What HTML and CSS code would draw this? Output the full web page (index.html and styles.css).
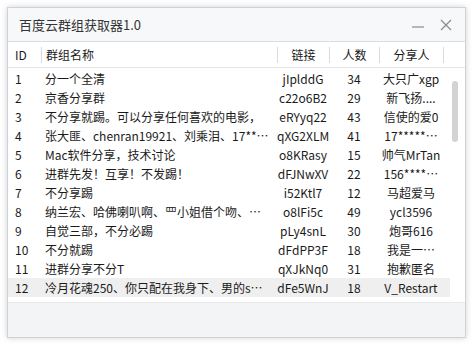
FILE: index.html
```html
<!DOCTYPE html>
<html lang="zh-CN">
<head>
  <meta charset="UTF-8">
  <title>百度云群组获取器1.0</title>
  <link rel="stylesheet" href="styles.css">
</head>
<body>
  <div class="window">
    <div class="titlebar">
      <span class="title">百度云群组获取器1.0</span>
      <div class="buttons">
        <svg class="btn" width="14" height="14" viewBox="0 0 14 14"><line x1="1" y1="9" x2="13" y2="9" stroke="#8a8a8a" stroke-width="1.2"/></svg>
        <svg class="btn" width="14" height="14" viewBox="0 0 14 14"><path d="M2 2 L12 12 M12 2 L2 12" stroke="#8a8a8a" stroke-width="1.2"/></svg>
      </div>
    </div>

    <div class="header">
      <div class="cell id">ID</div>
      <div class="cell name sep">群组名称</div>
      <div class="cell center sep">链接</div>
      <div class="cell center sep">人数</div>
      <div class="cell center sep">分享人</div>
      <div class="cell sep end"></div>
    </div>

    <div class="list">
      <div class="rows">
        <div class="row"><div class="cell id">1</div><div class="cell name">分一个全清</div><div class="cell center">jIplddG</div><div class="cell center">34</div><div class="cell center">大只广xgp</div></div>
        <div class="row"><div class="cell id">2</div><div class="cell name">京香分享群</div><div class="cell center">c22o6B2</div><div class="cell center">29</div><div class="cell center">新飞扬....</div></div>
        <div class="row"><div class="cell id">3</div><div class="cell name">不分享就踢。可以分享任何喜欢的电影，</div><div class="cell center">eRYyq22</div><div class="cell center">43</div><div class="cell center">信使的爱0</div></div>
        <div class="row"><div class="cell id">4</div><div class="cell name">张大匪、chenran19921、刘乘泪、17**…</div><div class="cell center">qXG2XLM</div><div class="cell center">41</div><div class="cell center">17*****…</div></div>
        <div class="row"><div class="cell id">5</div><div class="cell name">Mac软件分享，技术讨论</div><div class="cell center">o8KRasy</div><div class="cell center">15</div><div class="cell center">帅气MrTan</div></div>
        <div class="row"><div class="cell id">6</div><div class="cell name">进群先发！互享！不发踢！</div><div class="cell center">dFJNwXV</div><div class="cell center">22</div><div class="cell center">156****…</div></div>
        <div class="row"><div class="cell id">7</div><div class="cell name">不分享踢</div><div class="cell center">i52Ktl7</div><div class="cell center">12</div><div class="cell center">马超爱马</div></div>
        <div class="row"><div class="cell id">8</div><div class="cell name">纳兰宏、哈佛喇叭啊、罒小姐借个吻、…</div><div class="cell center">o8lFi5c</div><div class="cell center">49</div><div class="cell center">ycl3596</div></div>
        <div class="row"><div class="cell id">9</div><div class="cell name">自觉三部，不分必踢</div><div class="cell center">pLy4snL</div><div class="cell center">30</div><div class="cell center">炮哥616</div></div>
        <div class="row"><div class="cell id">10</div><div class="cell name">不分就踢</div><div class="cell center">dFdPP3F</div><div class="cell center">18</div><div class="cell center">我是一…</div></div>
        <div class="row"><div class="cell id">11</div><div class="cell name">进群分享不分T</div><div class="cell center">qXJkNq0</div><div class="cell center">31</div><div class="cell center">抱歉匿名</div></div>
        <div class="row selected"><div class="cell id">12</div><div class="cell name">冷月花魂250、你只配在我身下、男的s…</div><div class="cell center">dFe5WnJ</div><div class="cell center">18</div><div class="cell center">V_Restart</div></div>
      </div>
      <div class="scrollbar"><div class="thumb"></div></div>
    </div>

    <div class="footer"></div>
  </div>
</body>
</html>
```

FILE: styles.css
```css
body {
  margin: 0;
  padding: 7px;
  background-color: #ffffff;
  font-family: "Noto Sans CJK SC", sans-serif;
  color: #1a1a1a;
}
.window {
  width: 457px;
  height: 329px;
  border: 1px solid #cfd2d6;
  background-color: #ffffff;
  box-shadow: 0 0 6px rgba(0, 0, 0, 0.18);
  display: flex;
  flex-direction: column;
}
.titlebar {
  height: 33px;
  border-bottom: 1px solid #dcdee2;
  background-color: #f7f8fa;
  display: flex;
  align-items: center;
  justify-content: space-between;
  padding: 0 12px 0 11px;
}
.title {
  font-size: 13px;
  color: #333;
}
.buttons {
  display: flex;
  gap: 14px;
}
.header {
  height: 25px;
  border-bottom: 1px solid #e3e5e8;
  display: grid;
  grid-template-columns: 33px 236px 52px 50px 64px 1fr;
  align-items: center;
  font-size: 12px;
}
.header .cell {
  line-height: 16px;
}
.sep {
  border-left: 1px solid #d8dadd;
}
.header .end {
  height: 16px;
}
.cell {
  white-space: nowrap;
}
.id {
  padding-left: 7px;
}
.name {
  padding-left: 4px;
  padding-right: 6px;
  overflow: hidden;
  text-overflow: ellipsis;
}
.center {
  text-align: center;
}
.list {
  display: flex;
  background-color: #ffffff;
}
.rows {
  width: 442px;
  padding-top: 1px;
}
.row {
  height: 19px;
  display: grid;
  grid-template-columns: 33px 236px 52px 50px 64px 1fr;
  align-items: center;
  font-size: 12px;
  line-height: 19px;
}
.row.selected {
  background-color: #efefef;
}
.scrollbar {
  flex: 1;
  padding: 13px 0 0 2px;
}
.thumb {
  width: 6px;
  height: 61px;
  border-radius: 3px;
  background-color: #d3d3d3;
}
.footer {
  flex: 1;
  margin-top: 5px;
  border-top: 1px solid #e6e8eb;
  background-color: #f3f4f6;
}
```
